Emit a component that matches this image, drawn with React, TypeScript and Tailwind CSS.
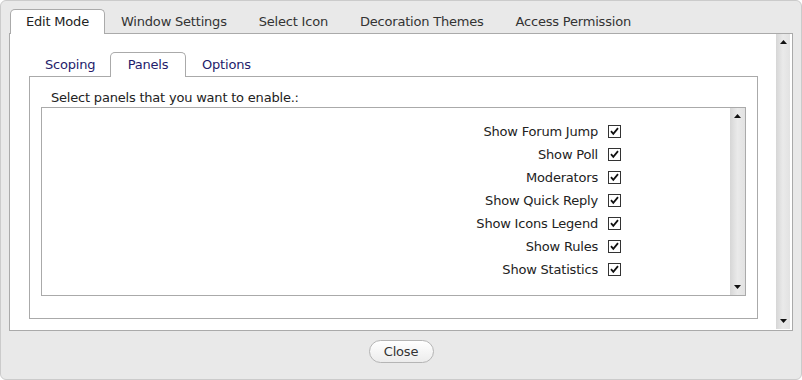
import React from "react";

const font = { fontFamily: '"DejaVu Sans", Verdana, sans-serif' };

function Arrow({ dir }: { dir: "up" | "down" }) {
  return (
    <svg width="7" height="4" viewBox="0 0 7 4" className="block">
      {dir === "up" ? (
        <polygon points="3.5,0 7,4 0,4" fill="#111" />
      ) : (
        <polygon points="0,0 7,0 3.5,4" fill="#111" />
      )}
    </svg>
  );
}

function ScrollBar({ className }: { className: string }) {
  return (
    <div
      className={
        "flex flex-col items-center justify-between bg-gradient-to-r from-[#d6d6d6] via-[#eaeaea] to-[#e2e2e2] " +
        className
      }
    >
      <div className="pt-[6px]">
        <Arrow dir="up" />
      </div>
      <div className="pb-[6px]">
        <Arrow dir="down" />
      </div>
    </div>
  );
}

function CheckBox() {
  return (
    <svg width="13" height="13" viewBox="0 0 13 13" className="block">
      <rect x="0.5" y="0.5" width="12" height="12" fill="#fff" stroke="#333" />
      <path d="M3 6.2 L5.3 8.8 L10 3.2" fill="none" stroke="#111" strokeWidth="1.8" />
    </svg>
  );
}

const items = [
  "Show Forum Jump",
  "Show Poll",
  "Moderators",
  "Show Quick Reply",
  "Show Icons Legend",
  "Show Rules",
  "Show Statistics",
];

export default function App() {
  const topTabs = ["Window Settings", "Select Icon", "Decoration Themes", "Access Permission"];
  return (
    <div
      style={font}
      className="w-[802px] h-[380px] bg-[#e9e9e9] border border-[#cbcbcb] rounded-[6px] pt-[8px] px-[8px] flex flex-col text-[13px] tracking-[-0.2px]"
    >
      {/* top tabs */}
      <div className="h-[25px] -mb-px flex items-stretch pl-px relative z-10">
        <div className="w-[95px] bg-white border border-b-0 border-[#aaaaaa] rounded-t-[5px] flex items-center justify-center text-[#222]">
          Edit Mode
        </div>
        {topTabs.map((t) => (
          <div key={t} className="px-[16px] flex items-center text-[#333]">
            {t}
          </div>
        ))}
      </div>
      {/* panel */}
      <div className="h-[298px] bg-white border border-[#aaaaaa] flex">
        <div className="flex-1 pt-[18px] pl-[19px] pr-[18px] flex flex-col">
          {/* inner tabs */}
          <div className="h-[25px] -mb-px flex items-stretch relative z-10">
            <div className="w-[81px] pl-[16px] flex items-center text-[#241c6b]">Scoping</div>
            <div className="w-[76px] bg-white border border-b-0 border-[#aaaaaa] rounded-t-[5px] flex items-center justify-center text-[#241c6b]">
              Panels
            </div>
            <div className="px-[16px] flex items-center text-[#241c6b]">Options</div>
          </div>
          <div className="h-[243px] border border-[#aaaaaa] px-[11px] flex flex-col">
            <div className="h-[30px] flex items-end pb-[1px] pl-[10px] leading-[16px] text-[#222]">
              Select panels that you want to enable.:
            </div>
            <div className="h-[189px] border border-[#aaaaaa] flex">
              <div className="flex-1 pt-[12px] pr-[109px] flex flex-col items-end">
                {items.map((it) => (
                  <div key={it} className="h-[23px] flex items-center gap-[10px] text-[#222]">
                    <span>{it}</span>
                    <CheckBox />
                  </div>
                ))}
              </div>
              <ScrollBar className="w-[15px]" />
            </div>
          </div>
        </div>
        <ScrollBar className="w-[14px] mr-[2px] mb-px" />
      </div>
      {/* footer */}
      <div className="pt-[9px] flex justify-center">
        <button
          style={font}
          className="w-[65px] h-[23px] rounded-full border border-[#b5b5b5] bg-gradient-to-b from-[#ffffff] to-[#ececec] text-[13px] tracking-[-0.2px] text-[#333] flex items-center justify-center"
        >
          Close
        </button>
      </div>
    </div>
  );
}
